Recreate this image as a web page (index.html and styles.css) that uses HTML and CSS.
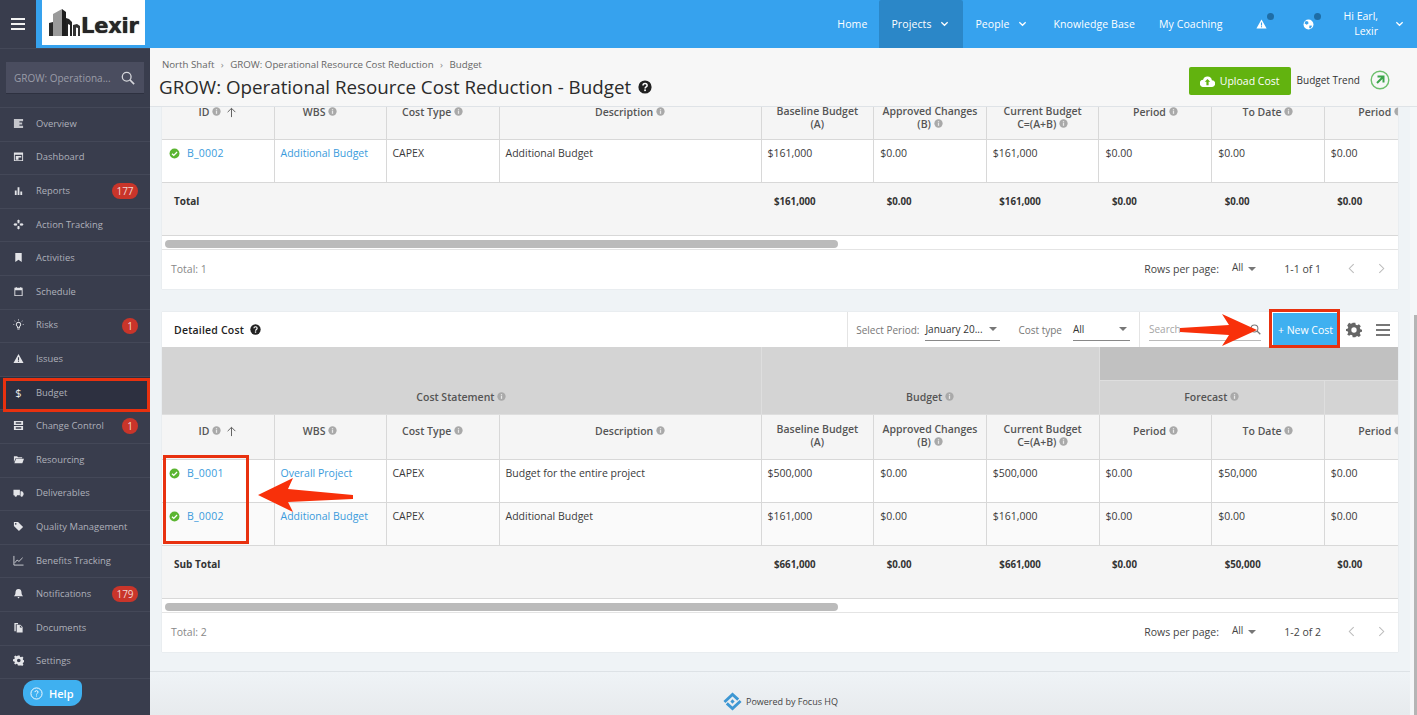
FILE: index.html
```html
<!DOCTYPE html>
<html lang="en">
<head>
<meta charset="utf-8">
<title>GROW: Operational Resource Cost Reduction - Budget</title>
<link rel="stylesheet" href="styles.css">
</head>
<body>
<svg class="defs" width="0" height="0" aria-hidden="true">
  <symbol id="info" viewBox="0 0 10 10"><circle cx="5" cy="5" r="4.6" fill="#a9a9a9"/><rect x="4.3" y="4.2" width="1.4" height="3.4" fill="#e8e8e8"/><rect x="4.3" y="2.4" width="1.4" height="1.2" fill="#e8e8e8"/></symbol>
  <symbol id="ok" viewBox="0 0 12 12"><circle cx="6" cy="6" r="5.4" fill="#5bb531"/><path d="M3.3 6.2l1.9 1.9 3.6-3.7" fill="none" stroke="#fff" stroke-width="1.4"/></symbol>
  <symbol id="q" viewBox="0 0 14 14"><circle cx="7" cy="7" r="6.6" fill="#222"/><path d="M5 5.4c0-2.5 4.1-2.5 4.1 0 0 1.6-2 1.5-2 3.1" fill="none" stroke="#fff" stroke-width="1.5"/><rect x="6.2" y="9.4" width="1.7" height="1.7" fill="#fff"/></symbol>
  <symbol id="up" viewBox="0 0 12 12"><path d="M6 11V1.6M1.8 5.6L6 1.4l4.2 4.2" fill="none" stroke="#555" stroke-width="1"/></symbol>
  <symbol id="chev" viewBox="0 0 10 6"><path d="M1.5 1l3.5 3.4L8.5 1" fill="none" stroke="currentColor" stroke-width="1.4"/></symbol>
</svg>

<header class="topbar">
  <button class="burger" aria-label="Menu"><span></span><span></span><span></span></button>
  <div class="logo">
    <svg class="logo-mark" viewBox="0 0 32 29" width="32" height="29"><path d="M0 28V15l4-1v14z" fill="#2a2a2a"/><path d="M4 28V6l9-5v27z" fill="#9a9a9a"/><path d="M13 1l4 3v24h-4z" fill="#1e1e1e"/><path d="M17 28V10l3 1 3 3v14h-2V17l-2-1v12z" fill="#242424"/><path d="M24 28V17l4-1 3 2v10h-2V20l-2-.5V28z" fill="#333"/></svg>
    <span class="logo-text">Lexir</span>
  </div>
  <nav class="topnav">
    <a class="tn tn-home">Home</a>
    <a class="tn tn-active">Projects <svg class="chev" width="9" height="6"><use href="#chev"/></svg></a>
    <a class="tn tn-people">People <svg class="chev" width="9" height="6"><use href="#chev"/></svg></a>
    <a class="tn">Knowledge Base</a>
    <a class="tn">My Coaching</a>
    <span class="tn-ic tn-alert"><svg viewBox="0 0 12 11" width="11" height="10"><path d="M6 .5l5.6 10H.4z" fill="#fff"/><rect x="5.4" y="3.8" width="1.2" height="3.4" fill="#36a2ee"/><rect x="5.4" y="7.9" width="1.2" height="1.2" fill="#36a2ee"/></svg><i class="dot"></i></span>
    <span class="tn-ic tn-globe"><svg viewBox="0 0 12 12" width="11" height="11"><circle cx="6" cy="6" r="5.4" fill="#fff"/><path d="M3 2.2l2.6.6.4 2-2 1.4-2.4-1.6zM7 7l3 .3-1.8 3-1.4-.6z" fill="#36a2ee"/></svg><i class="dot"></i></span>
    <div class="user"><span>Hi Earl,<br>Lexir</span><svg class="chev" width="9" height="6"><use href="#chev"/></svg></div>
  </nav>
</header>

<div class="shell">
  <aside class="sidebar">
    <div class="side-search"><span class="ss-text">GROW: Operationa...</span>
      <svg viewBox="0 0 16 16" width="14" height="14"><circle cx="6.5" cy="6.5" r="5" fill="none" stroke="#d5d6db" stroke-width="1.5"/><path d="M10.2 10.2l4.8 4.8" stroke="#d5d6db" stroke-width="1.8"/></svg>
    </div>
    <ul class="menu">
      <li><svg viewBox="0 0 12 12"><path d="M1 1h10v2.5H7v1.5h3v2H7v1.5h4V11H1z" fill="#c4c5cb"/></svg>Overview</li>
      <li><svg viewBox="0 0 12 12"><path d="M1 1.5h10V11H1zM2 4v6h8V4zM3 5.5h6V7H6v2.5H3z"/></svg>Dashboard</li>
      <li><svg viewBox="0 0 12 12"><path d="M2 6h2v5H2zM5 2.500h2V11H5zM8 7h2v4H8z"/></svg>Reports<b class="pill">177</b></li>
      <li><svg viewBox="0 0 12 12"><path d="M6 .5l2 2H7v2H5v-2H4zM6 11.500l-2-2h1v-2h2v2h1zM.5 6l2-2v1h2v2h-2v1zM11.500 6l-2 2V7h-2V5h2V4z"/></svg>Action Tracking</li>
      <li><svg viewBox="0 0 12 12"><path d="M2.500 1h7v10L6 8.500 2.500 11z"/></svg>Activities</li>
      <li><svg viewBox="0 0 12 12"><path d="M1.500 2H3V1h1v1h4V1h1v1h1.500v9h-9zM2.500 4.500V10h7V4.500z"/></svg>Schedule</li>
      <li><svg viewBox="0 0 12 12"><path d="M6 3a3 3 0 0 1 1.600 5.500V10H4.400V8.500A3 3 0 0 1 6 3zm0 1a2 2 0 0 0-.7 3.800V9h1.400V7.800A2 2 0 0 0 6 4zM5.700 0h.6v2h-.6zM0 5.700h1.500v.6H0zM10.500 5.700H12v.6h-1.500zM1.700 1.500l1.100 1.100-.4.4-1.100-1.100zM10.300 1.500l.4.4-1.100 1.100-.4-.4zM4.800 10.500h2.400v1H4.800z"/></svg>Risks<b class="pill pill-round">1</b></li>
      <li><svg viewBox="0 0 12 12"><path d="M6 1l5.500 10H.5zM5.400 4.500v3h1.200v-3zM5.400 8.300v1.200h1.200V8.300z" fill-rule="evenodd"/></svg>Issues</li>
      <li class="current"><span class="dollar">$</span>Budget</li>
      <li><svg viewBox="0 0 12 12"><path d="M1 1h10v4.500H1zM1 6.500h10V11H1zM3 2.500v1.500h6V2.500zM3 8v1.500h6V8z" fill-rule="evenodd"/></svg>Change Control<b class="pill pill-round">1</b></li>
      <li><svg viewBox="0 0 12 12"><path d="M1 2.500h3.500l1 1H10v1H2.800L1 9zM3.300 5.200H12L10.200 10H1.500z"/></svg>Resourcing</li>
      <li><svg viewBox="0 0 12 12"><path d="M.5 3h7v6H.5zM8.200 4.500h1.800l1.500 2V9H8.200z"/><circle cx="3" cy="9.300" r="1.300"/><circle cx="9.500" cy="9.300" r="1.300"/></svg>Deliverables</li>
      <li><svg viewBox="0 0 12 12"><path d="M1 1h4.500l5.500 5.500L6.500 11 1 5.500zM3 2.300a.9.900 0 1 0 0 1.800.9.900 0 0 0 0-1.800z" fill-rule="evenodd"/></svg>Quality Management</li>
      <li><svg viewBox="0 0 12 12"><path d="M1 1v10h10.500" fill="none" stroke="#e3e4e8" stroke-width=".9"/><path d="M2 8.500l2.500-3 2 1.500L10.500 3" fill="none" stroke="#e3e4e8" stroke-width=".9"/></svg>Benefits Tracking</li>
      <li><svg viewBox="0 0 12 12"><path d="M6 1c2.400 0 3.300 1.800 3.300 4 0 2 .7 3 1.700 4H1c1-1 1.700-2 1.700-4C2.700 2.800 3.600 1 6 1zM4.800 9.800h2.400L6 11.500z"/></svg>Notifications<b class="pill">179</b></li>
      <li><svg viewBox="0 0 12 12"><path d="M1.500 1h4v1.500h-2.500V10H1.500zM4 3h4l2.500 2.500V11.500H4zM7.500 3.500v2.500H10z" fill-rule="evenodd"/></svg>Documents</li>
      <li><svg viewBox="0 0 12 12"><path d="M5 .5h2l.3 1.500 1.100.5 1.300-.8 1.400 1.400-.8 1.300.5 1.100 1.500.3v2l-1.500.3-.5 1.100.8 1.300-1.400 1.400-1.300-.8-1.100.5L7 11.500H5l-.3-1.500-1.100-.5-1.300.8L.9 9.400l.8-1.300-.5-1.100L-.3 6.700v-2l1.500-.3.5-1.100-.8-1.300L2.300.6l1.300.8 1.100-.5zM6 4a2 2 0 1 0 0 4 2 2 0 0 0 0-4z" fill-rule="evenodd" transform="translate(.3 0)"/></svg>Settings</li>
    </ul>
    <div class="help"><svg viewBox="0 0 14 14" width="13" height="13"><circle cx="7" cy="7" r="6" fill="none" stroke="#fff" stroke-width="1"/><path d="M5.300 5.500c0-2.100 3.400-2.100 3.400 0 0 1.300-1.700 1.200-1.700 2.600" fill="none" stroke="#fff" stroke-width="1"/><rect x="6.500" y="9.200" width="1" height="1" fill="#fff"/></svg>Help</div>
  </aside>

  <main class="main">
    <div class="page-head">
      <div>
        <div class="crumbs">North Shaft <i>›</i> GROW: Operational Resource Cost Reduction <i>›</i> Budget</div>
        <h1>GROW: Operational Resource Cost Reduction - Budget <svg width="14" height="14"><use href="#q"/></svg></h1>
      </div>
      <div class="head-actions">
        <button class="upload"><svg viewBox="0 0 16 12" width="15" height="11"><path d="M12.800 4.600A5 5 0 0 0 3.200 4 3.900 3.900 0 0 0 4 12h8.500a3.700 3.700 0 0 0 .3-7.400z" fill="#fff"/><path d="M8 3.200l3 3.200H9.200V10H6.800V6.400H5z" fill="#62b30f"/></svg>Upload Cost</button>
        <span class="trend-label">Budget Trend</span>
        <svg class="trend" viewBox="0 0 20 20" width="20" height="20"><circle cx="10" cy="10" r="8.800" fill="none" stroke="#6cbf6c" stroke-width="1.400"/><path d="M7.500 6.500h6v6M13 7l-6 6" fill="none" stroke="#3ca64c" stroke-width="2"/></svg>
      </div>
    </div>

    <div class="scroll">
      <section class="card card-top">
        <div class="tbl-wrap">
          <table class="tbl tbl-clipped">
            <colgroup><col class="c1"><col class="c2"><col class="c3"><col class="c4"><col class="c5"><col class="c5"><col class="c5"><col class="c5"><col class="c5"><col class="c5"></colgroup>
            <thead><tr class="head head-clipped">
              <th>ID <svg class="inf"><use href="#info"/></svg> <svg class="up"><use href="#up"/></svg></th>
              <th class="off">WBS <svg class="inf"><use href="#info"/></svg></th>
              <th class="off">Cost Type <svg class="inf"><use href="#info"/></svg></th>
              <th>Description <svg class="inf"><use href="#info"/></svg></th>
              <th class="two">Baseline Budget<br>(A)</th>
              <th class="two">Approved Changes<br>(B) <svg class="inf"><use href="#info"/></svg></th>
              <th class="two">Current Budget<br>C=(A+B) <svg class="inf"><use href="#info"/></svg></th>
              <th>Period <svg class="inf"><use href="#info"/></svg></th>
              <th>To Date <svg class="inf"><use href="#info"/></svg></th>
              <th>Period <svg class="inf"><use href="#info"/></svg></th>
            </tr></thead>
            <tbody>
              <tr class="row">
                <td class="idc"><svg class="okic"><use href="#ok"/></svg><a>B_0002</a></td><td><a>Additional Budget</a></td><td>CAPEX</td><td>Additional Budget</td><td>$161,000</td><td>$0.00</td><td>$161,000</td><td>$0.00</td><td>$0.00</td><td>$0.00</td>
              </tr>
              <tr class="tot">
                <td colspan="4" class="tot-label">Total</td><td>$161,000</td><td>$0.00</td><td>$161,000</td><td>$0.00</td><td>$0.00</td><td>$0.00</td>
              </tr>
            </tbody>
          </table>
        </div>
        <div class="hbar"><span></span></div>
        <div class="pager"><span class="p-total">Total: 1</span><span class="p-rows">Rows per page:</span><span class="p-sel">All</span><i class="caret"></i><span class="p-range">1-1 of 1</span><svg class="p-nav" viewBox="0 0 8 12" width="7" height="11"><path d="M6.500 1L1.500 6l5 5" fill="none" stroke="#bbb" stroke-width="1.200"/></svg><svg class="p-nav p-next" viewBox="0 0 8 12" width="7" height="11"><path d="M1.500 1l5 5-5 5" fill="none" stroke="#bbb" stroke-width="1.200"/></svg></div>
      </section>

      <section class="card card-detail">
        <div class="toolbar">
          <div class="tb-title">Detailed Cost <svg width="11" height="11"><use href="#q"/></svg></div>
          <div class="tb-filters">
            <span class="tb-label">Select Period:</span>
            <span class="tb-select tb-period">January 20...<i class="caret"></i></span>
            <span class="tb-label tb-ct">Cost type</span>
            <span class="tb-select tb-type">All<i class="caret"></i></span>
          </div>
          <div class="tb-search"><span>Search</span><svg viewBox="0 0 16 16" width="11" height="11"><circle cx="6.500" cy="6.500" r="5" fill="none" stroke="#777" stroke-width="1.500"/><path d="M10.200 10.200l4.800 4.800" stroke="#777" stroke-width="1.800"/></svg></div>
          <button class="new-cost">+ New Cost</button>
          <svg class="gear" viewBox="0 0 12 12" width="16" height="16"><path d="M5 .5h2l.3 1.500 1.100.5 1.300-.8 1.400 1.400-.8 1.300.5 1.100 1.500.3v1.400l-1.500.3-.5 1.100.8 1.300-1.400 1.400-1.300-.8-1.100.5L7 11.500H5l-.3-1.500-1.100-.5-1.300.8L.9 9.400l.8-1.300-.5-1.100L-.3 6.700v-1.400l1.500-.3.5-1.100-.8-1.300L2.300.600l1.300.8 1.100-.5zM6 4a2 2 0 1 0 0 4 2 2 0 0 0 0-4z" fill="#666" fill-rule="evenodd"/></svg>
          <div class="lines"><span></span><span></span><span></span></div>
        </div>
        <div class="tbl-wrap">
          <table class="tbl">
            <colgroup><col class="c1"><col class="c2"><col class="c3"><col class="c4"><col class="c5"><col class="c5"><col class="c5"><col class="c5"><col class="c5"><col class="c5"></colgroup>
            <thead>
              <tr class="grp1">
                <th colspan="4" rowspan="2" class="grp">Cost Statement <svg class="inf"><use href="#info"/></svg></th>
                <th colspan="3" rowspan="2" class="grp">Budget <svg class="inf"><use href="#info"/></svg></th>
                <th colspan="3" class="grp-dark"></th>
              </tr>
              <tr class="grp2">
                <th colspan="2" class="grp grp-f">Forecast <svg class="inf"><use href="#info"/></svg></th>
                <th class="grp grp-f"></th>
              </tr>
              <tr class="head">
                <th>ID <svg class="inf"><use href="#info"/></svg> <svg class="up"><use href="#up"/></svg></th>
                <th class="off">WBS <svg class="inf"><use href="#info"/></svg></th>
                <th class="off">Cost Type <svg class="inf"><use href="#info"/></svg></th>
                <th>Description <svg class="inf"><use href="#info"/></svg></th>
                <th class="two">Baseline Budget<br>(A)</th>
                <th class="two">Approved Changes<br>(B) <svg class="inf"><use href="#info"/></svg></th>
                <th class="two">Current Budget<br>C=(A+B) <svg class="inf"><use href="#info"/></svg></th>
                <th>Period <svg class="inf"><use href="#info"/></svg></th>
                <th>To Date <svg class="inf"><use href="#info"/></svg></th>
                <th>Period <svg class="inf"><use href="#info"/></svg></th>
              </tr>
            </thead>
            <tbody>
              <tr class="row">
                <td class="idc"><svg class="okic"><use href="#ok"/></svg><a>B_0001</a></td><td><a>Overall Project</a></td><td>CAPEX</td><td>Budget for the entire project</td><td>$500,000</td><td>$0.00</td><td>$500,000</td><td>$0.00</td><td>$50,000</td><td>$0.00</td>
              </tr>
              <tr class="row row-alt">
                <td class="idc"><svg class="okic"><use href="#ok"/></svg><a>B_0002</a></td><td><a>Additional Budget</a></td><td>CAPEX</td><td>Additional Budget</td><td>$161,000</td><td>$0.00</td><td>$161,000</td><td>$0.00</td><td>$0.00</td><td>$0.00</td>
              </tr>
              <tr class="tot">
                <td colspan="4" class="tot-label">Sub Total</td><td>$661,000</td><td>$0.00</td><td>$661,000</td><td>$0.00</td><td>$50,000</td><td>$0.00</td>
              </tr>
            </tbody>
          </table>
        </div>
        <div class="hbar"><span></span></div>
        <div class="pager"><span class="p-total">Total: 2</span><span class="p-rows">Rows per page:</span><span class="p-sel">All</span><i class="caret"></i><span class="p-range">1-2 of 2</span><svg class="p-nav" viewBox="0 0 8 12" width="7" height="11"><path d="M6.500 1L1.500 6l5 5" fill="none" stroke="#bbb" stroke-width="1.200"/></svg><svg class="p-nav p-next" viewBox="0 0 8 12" width="7" height="11"><path d="M1.500 1l5 5-5 5" fill="none" stroke="#bbb" stroke-width="1.200"/></svg></div>
      </section>

      <footer class="foot"><svg viewBox="0 0 20 20" width="19" height="19"><path d="M1.500 10.500L10 2.500l6 5.500M18.500 9.500L10 17.500l-6-5.500" fill="none" stroke="#3d97d3" stroke-width="3"/><rect x="8.400" y="8.400" width="3.200" height="3.200" transform="rotate(45 10 10)" fill="#3d97d3"/></svg>Powered by Focus HQ</footer>
    </div>
    <div class="vtrack"><div class="vthumb"></div></div>
  </main>
</div>

<div class="mark mark-budget"></div>
<div class="mark mark-ids"></div>
<div class="mark mark-new"></div>
<svg class="arrows" viewBox="0 0 1417 715" width="1417" height="715" aria-hidden="true">
  <path d="M1180 328 L1229 325 L1222 314 L1257 330 L1222 346 L1229 335 L1180 332Z" fill="#f8300a"/>
  <path d="M258 495 L293 478 L288 489 L353 495 L353 499 L288 502 L293 512Z" fill="#f8300a"/>
</svg>
</body>
</html>
```

FILE: styles.css
```css
* { box-sizing: border-box; }
html, body { margin: 0; height: 100%; }
body { font-family: "Open Sans", "Noto Sans", sans-serif; font-size: 11px; color: #333; overflow: hidden; background: #eff3f6; }
.defs { position: absolute; }
button { font-family: inherit; border: 0; padding: 0; }

/* Top bar */
.topbar { height: 48px; background: #36a2ee; display: flex; align-items: stretch; }
.burger { width: 36px; background: #393d4d; display: flex; flex-direction: column; justify-content: center; align-items: center; gap: 3px; }
.burger span { display: block; width: 14px; height: 2px; background: #f2f2f2; }
.logo { width: 103px; height: 45px; margin-left: 6px; background: #fff; display: flex; align-items: flex-end; padding: 0 0 8px 7px; }
.logo-mark { flex: none; margin-right: 0; }
.logo-text { font-family: "DejaVu Sans", sans-serif; font-weight: 700; font-size: 21px; line-height: 22px; color: #262626; letter-spacing: -.2px; text-shadow: 0 0 1px #333; }
.topnav { margin-left: auto; display: flex; align-items: stretch; color: #fff; }
.tn { display: flex; align-items: center; gap: 8px; padding: 0 12px 1px; font-size: 10.500px; letter-spacing: .1px; white-space: nowrap; }
.tn-active { background: #2b87c8; width: 84px; gap: 9px; border-radius: 2px 2px 0 0; }
.tn-people { width: 78px; }
.tn-ic { position: relative; display: flex; align-items: center; justify-content: center; width: 11px; }
.tn-alert { margin-left: 21px; }
.tn-globe { margin-left: 36px; }
.dot { position: absolute; top: 13px; right: -7px; width: 7px; height: 7px; border-radius: 50%; background: #1e6da6; }
.user { display: flex; align-items: center; gap: 17px; margin-left: 30px; padding-right: 13px; text-align: right; line-height: 15px; font-size: 10.500px; }
.chev { color: #fff; flex: none; }

/* Shell */
.shell { display: flex; height: calc(100vh - 48px); }
.sidebar { width: 150px; flex: none; background: #393d4d; position: relative; border-top: 1px solid #444858; }
.side-search { margin: 13px 6px 0; height: 32px; background: #4a4d5f; border-bottom: 1px solid #2e3140; display: flex; align-items: center; justify-content: space-between; padding: 0 9px 0 8px; color: #9a9ca8; font-size: 10px; }
.menu { list-style: none; margin: 13px 0 0; padding: 0; border-top: 1px solid #444858; }
.menu li { height: 33.600px; display: flex; align-items: center; padding: 0 0 2px 13px; color: #aeb0ba; font-size: 9.400px; font-weight: 400; border-bottom: 1px solid #444858; position: relative; }
.menu svg { width: 11px; height: 11px; fill: #e3e4e8; margin-right: 12px; flex: none; }
.menu .current { background: #2d3040; }
.dollar { width: 11px; margin-right: 12px; color: #eee; text-align: center; font-size: 11px; flex: none; }
.pill { position: absolute; right: 12px; top: 8px; min-width: 26px; height: 16px; border-radius: 8px; background: #c9352a; color: #f3d6d2; font-weight: 400; font-size: 10px; line-height: 16px; text-align: center; }
.pill-round { min-width: 16px; width: 16px; }
.help { position: absolute; left: 23px; top: 631px; width: 59px; height: 26px; background: #3fb0f0; border-radius: 12px 6px 12px 12px; color: #fff; font-weight: 600; font-size: 11px; display: flex; align-items: center; gap: 6px; padding-left: 7px; }

/* Main */
.main { flex: 1; min-width: 0; display: flex; flex-direction: column; position: relative; }
.page-head { height: 59px; flex: none; background: #f7f7f7; border-bottom: 1px solid #dfe3e7; display: flex; justify-content: space-between; padding: 10px 0 0 9px; }
.crumbs { font-size: 9.700px; color: #666; padding-left: 3px; line-height: 13px; }
.crumbs i { font-style: normal; margin: 0 4px; color: #888; }
h1 { margin: 4px 0 0; font-size: 18.780px; font-weight: 400; line-height: 25px; color: #2b2b2b; white-space: nowrap; }
h1 svg { margin-left: 2px; }
.head-actions { display: flex; align-items: flex-start; padding: 9px 27px 0 0; }
.upload { width: 102px; height: 28px; background: #62b30f; border-radius: 2px; color: #fff; font-size: 10.500px; display: flex; align-items: center; justify-content: center; gap: 5px; }
.trend-label { margin: 6px 10px 0 6px; font-size: 10px; color: #333; white-space: nowrap; }
.trend { margin-top: 3px; }

.scroll { flex: 1; min-height: 0; overflow: hidden; padding: 0 19px 0 12px; }
.card { background: #fff; box-shadow: 0 0 1px rgba(0,0,0,.15); }
.card-top { height: 182px; }
.card-detail { margin-top: 23px; height: 340px; }
.tbl-wrap { overflow: hidden; }
.tbl { border-collapse: collapse; table-layout: fixed; width: 1275px; font-size: 10.500px; }
.tbl-clipped { margin-top: -2px; }
.c1, .c2 { width: 112px; }
.c3 { width: 113px; }
.c4 { width: 262px; }
.c5 { width: 112.670px; }
.tbl th { font-weight: 600; color: #555; background: #f5f5f5; text-align: center; line-height: 13px; font-size: 10.500px; }
.tbl td, .tbl th { border: 1px solid #d8d8d8; }
.tbl td:first-child, .tbl th:first-child { border-left: 0; }
.inf { width: 9px; height: 9px; vertical-align: 0; }
.up { width: 11px; height: 11px; vertical-align: -2px; margin-left: 2px; }
.head th { height: 45px; vertical-align: middle; padding: 0 4px 10px; }
.head th.two { padding-bottom: 1px; }
.head th.off { padding-right: 24px; }
.head-clipped th { height: 34px; vertical-align: top; padding: 1px 4px 0; border-top: 0; }
.head-clipped th.two { padding: 0 4px; }
.head-clipped th.off { padding: 1px 24px 0 4px; }
.row td { height: 43px; vertical-align: top; padding: 6px 6px 0; background: #fff; color: #3a3a3a; white-space: nowrap; }
.row-alt td { background: #fafafa; }
.row td a { color: #3a9bdc; }
.row td.idc { padding-left: 7px; }
.okic { width: 11px; height: 11px; margin-right: 7px; vertical-align: -2px; }
.row td.idc a { letter-spacing: .2px; }
.tot td { height: 53px; vertical-align: top; padding: 12px 7px 0 13px; background: #f5f5f5; font-weight: 700; font-size: 9.700px; color: #333; border-left: 0; border-right: 0; }
.tbl .tot-label { padding: 11px 0 0 12px; font-size: 10px; }
.grp1 th { height: 33px; }
.grp2 th { height: 34px; }
.tbl .grp { background: #d4d4d4; vertical-align: bottom; padding-bottom: 10px; font-size: 10.500px; color: #555; border-color: #dedede; border-top: 0; }
.tbl .grp-f { vertical-align: middle; padding-bottom: 0; }
.tbl .grp-dark { background: #c1c1c1; border-color: #dedede; border-top: 0; }
.hbar { height: 14px; padding: 4px 3px 0; background: #fff; border-bottom: 1px solid #e4e4e4; }
.hbar span { display: block; width: 673px; height: 8px; border-radius: 4px; background: #bbb; }
.pager { height: 40px; display: flex; align-items: center; font-size: 10.500px; color: #444; padding: 0 13px 2px 9px; }
.p-total { color: #888; margin-right: auto; }
.p-sel { margin: -3px 0 0 13px; font-size: 10px; }
.caret { display: inline-block; width: 0; height: 0; border: 4px solid transparent; border-top-color: #777; border-bottom: 0; margin-left: 5px; }
.p-range { margin-left: 28px; }
.p-nav { margin-left: 27px; }
.p-next { margin-left: 23px; }

/* Toolbar */
.toolbar { height: 35px; display: flex; align-items: center; position: relative; }
.tb-title { font-weight: 600; font-size: 10.500px; color: #222; padding-left: 12px; margin-right: auto; display: flex; align-items: center; gap: 6px; letter-spacing: .2px; }
.tb-filters { height: 35px; display: flex; align-items: center; border-left: 1px solid #e4e4e4; border-right: 1px solid #e4e4e4; padding: 0 9px 0 8px; font-size: 10px; }
.tb-label { color: #777; white-space: nowrap; }
.tb-select { height: 22px; display: flex; justify-content: space-between; align-items: center; border-bottom: 1px solid #888; color: #333; white-space: nowrap; margin-left: 6px; }
.tb-period { width: 75px; }
.tb-ct { margin-left: 18px; }
.tb-type { width: 57px; margin-left: 11px; }
.tb-select .caret { margin: 0 3px 0 0; }
.tb-search { width: 112px; height: 22px; margin-left: 9px; border-bottom: 1px solid #bbb; display: flex; align-items: center; justify-content: space-between; color: #a5a5a5; font-size: 10px; }
.new-cost { width: 65px; height: 34px; margin-left: 12px; background: #3fb0f0; color: #fff; font-size: 10.500px; }
.gear { margin-left: 8px; }
.lines { display: flex; flex-direction: column; gap: 3px; margin: 0 8px 0 14px; }
.lines span { display: block; width: 14px; height: 2px; background: #777; }

.foot { margin: 19px -19px 0 -12px; padding: 20px 6px 0 0; border-top: 1px solid #dde2e6; display: flex; justify-content: center; align-items: flex-start; gap: 4px; font-size: 9px; line-height: 19px; color: #444; height: 50px; background: linear-gradient(#eff3f6, #e6e9ec); }

/* Page scrollbar */
.vtrack { position: absolute; right: 0; top: 59px; bottom: 0; width: 7px; background: #f4f6f8; }
.vthumb { position: absolute; right: 0; top: 208px; bottom: 0; width: 3px; background: #b5b5b5; }

/* Red annotations drawn over the screenshot */
.mark { position: absolute; border: 3px solid #e8310f; pointer-events: none; }
.mark-budget { left: 3px; top: 378px; width: 147px; height: 34px; }
.mark-ids { left: 163px; top: 455px; width: 86px; height: 89px; }
.mark-new { left: 1269px; top: 309px; width: 71px; height: 39px; }
.arrows { position: absolute; left: 0; top: 0; pointer-events: none; }
```
